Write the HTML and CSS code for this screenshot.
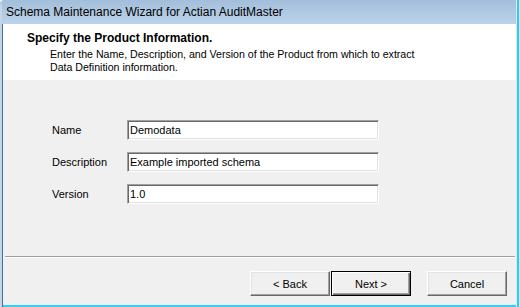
FILE: index.html
```html
<!DOCTYPE html>
<html lang="en">
<head>
    <meta charset="UTF-8">
    <title>Schema Maintenance Wizard</title>
    <link rel="stylesheet" href="styles.css">
</head>
<body>
    <div class="window">
        <div class="titlebar">Schema Maintenance Wizard for Actian AuditMaster</div>

        <!-- Page header -->
        <div class="header">
            <h1>Specify the Product Information.</h1>
            <p>Enter the Name, Description, and Version of the Product from which to extract<br>Data Definition information.</p>
        </div>

        <!-- Form fields -->
        <div class="content">
            <div class="field-row">
                <label for="name">Name</label>
                <input id="name" type="text" value="Demodata">
            </div>
            <div class="field-row">
                <label for="desc">Description</label>
                <input id="desc" type="text" value="Example imported schema">
            </div>
            <div class="field-row">
                <label for="version">Version</label>
                <input id="version" type="text" value="1.0">
            </div>
        </div>

        <!-- Wizard buttons -->
        <div class="footer">
            <div class="button-group">
                <button>&lt; Back</button>
                <button class="default-button">Next &gt;</button>
            </div>
            <button>Cancel</button>
        </div>
    </div>
</body>
</html>
```

FILE: styles.css
```css
body {
    margin: 0;
    width: 520px;
    height: 307px;
    overflow: hidden;
    font-family: "Liberation Sans", Arial, sans-serif;
    font-size: 11px;
    color: #000;
    background: #f0f0f0;
}

.window {
    height: 307px;
    box-sizing: border-box;
    display: flex;
    flex-direction: column;
    padding: 0 4px 2px 3px;
    background: #f0f0f0;
    border-top-left-radius: 5px;
    box-shadow:
        inset 2px 0 #c6d5e5,
        inset 3px 0 #46719f,
        inset -1px 0 #cfe6f1,
        inset -3px 0 #37c8f0,
        inset -4px 0 #dde6ee,
        inset 0 -2px #37cdf2;
}

.titlebar {
    height: 24px;
    line-height: 24px;
    padding-left: 4px;
    margin-left: -1px;
    font-size: 12px;
    background: linear-gradient(#a3bedb, #bcd3ea);
    border-top-left-radius: 4px;
    white-space: nowrap;
}

.header {
    height: 56px;
    box-sizing: border-box;
    padding: 8px 0 0 24px;
    background: #fff;
}

.header h1 {
    margin: 0;
    font-size: 12px;
    line-height: 13px;
    font-weight: bold;
}

.header p {
    margin: 3px 0 0 23px;
    font-size: 10.6px;
    line-height: 13px;
}

.content {
    height: 176px;
    box-sizing: border-box;
    padding: 40px 0 0 49px;
    display: flex;
    flex-direction: column;
    gap: 12px;
}

.field-row {
    display: flex;
    align-items: center;
}

.field-row label {
    width: 75px;
}

.field-row input {
    width: 252px;
    height: 20px;
    box-sizing: border-box;
    margin: 0;
    padding: 0 2px;
    font-family: inherit;
    font-size: 11px;
    background: #fff;
    border: 1px solid;
    border-color: #a0a0a0 #fff #fff #a0a0a0;
    box-shadow: inset 1px 1px #696969, inset -1px -1px #e3e3e3;
    outline: none;
}

.footer {
    flex: 1;
    display: flex;
    justify-content: flex-end;
    align-items: flex-start;
    gap: 16px;
    margin: 0 1px 0 2px;
    padding: 14px 8px 0 0;
    border-top: 1px solid #a0a0a0;
    box-shadow: inset 0 1px #fff;
}

.button-group {
    display: flex;
    gap: 1px;
}

button {
    width: 80px;
    height: 25px;
    box-sizing: border-box;
    margin: 0;
    padding: 0;
    font-family: inherit;
    font-size: 11px;
    color: #000;
    background: #f0f0f0;
    border: 1px solid;
    border-color: #fff #696969 #696969 #fff;
    box-shadow: inset -1px -1px #a0a0a0, inset 1px 1px #e3e3e3;
}

.default-button {
    border-color: #000;
    box-shadow: inset 1px 1px #fff, inset -1px -1px #696969, inset -2px -2px #a0a0a0;
}
```
